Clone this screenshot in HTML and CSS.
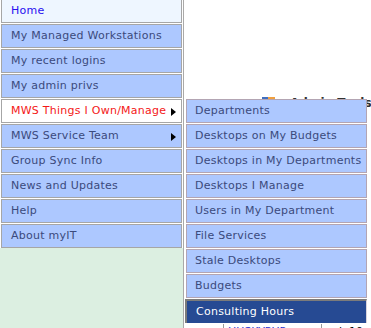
FILE: index.html
```html
<!DOCTYPE html>
<html lang="en">
<head>
    <meta charset="UTF-8">
    <meta name="viewport" content="width=device-width, initial-scale=1.0">
    <title>myIT</title>
    <link rel="stylesheet" href="styles.css">
</head>
<body>

<div class="page">
    <div class="sidebar">
        <ul class="menu">
            <li class="home">Home</li>
            <li>My Managed Workstations</li>
            <li>My recent logins</li>
            <li>My admin privs</li>
            <li class="has-sub open">MWS Things I Own/Manage
                <ul class="submenu">
                    <li>Departments</li>
                    <li>Desktops on My Budgets</li>
                    <li>Desktops in My Departments</li>
                    <li>Desktops I Manage</li>
                    <li>Users in My Department</li>
                    <li>File Services</li>
                    <li>Stale Desktops</li>
                    <li>Budgets</li>
                    <li class="current">Consulting Hours</li>
                </ul>
            </li>
            <li class="has-sub">MWS Service Team</li>
            <li>Group Sync Info</li>
            <li>News and Updates</li>
            <li>Help</li>
            <li>About myIT</li>
        </ul>
    </div>

    <div class="main">
        <h1 class="title"><span class="title-icon"></span>Admin Tools</h1>
        <table class="list">
            <tr>
                <td class="name"><a href="#">HUSKYPUP</a></td>
                <td>vvin10</td>
            </tr>
        </table>
    </div>
</div>

</body>
</html>
```

FILE: styles.css
```css
body {
    margin: 0;
    font-family: "DejaVu Sans", Verdana, sans-serif;
    font-size: 11px;
    background: #fff;
    overflow: hidden;
}
.page {
    display: flex;
    min-height: 328px;
}
.sidebar {
    width: 183px;
    flex: none;
    background: #dcefe1;
    border-right: 1px solid #a9a9a9;
}
.menu,
.submenu {
    list-style: none;
    margin: 0;
    padding: 0;
}
.menu {
    background: #fff;
}
.menu li {
    box-sizing: border-box;
    position: relative;
    height: 24px;
    line-height: 22px;
    margin: 0 1px 1px 1px;
    padding-left: 9px;
    border: 1px solid #a6a6a6;
    background: #adc8ff;
    color: #3b4a7c;
    letter-spacing: 0.25px;
    white-space: nowrap;
}
.menu > li:last-child {
    margin-bottom: 0;
}
.menu .home {
    margin-top: -1px;
    background: #eef6ff;
    color: #2a10f0;
}
.menu .open {
    background: #fff;
    color: #f41818;
}
.has-sub::after {
    content: "";
    position: absolute;
    right: 5px;
    top: 8px;
    border-left: 5px solid #000;
    border-top: 4.5px solid transparent;
    border-bottom: 4.5px solid transparent;
}
.submenu {
    position: absolute;
    top: -1px;
    left: 183px;
    width: 182px;
    z-index: 2;
}
.menu .submenu li {
    margin: 0 0 1px 1px;
    padding-left: 8px;
    border-color: #b3a5b3;
    color: #3b4a7c;
    background: #adc8ff;
}
.menu .submenu .current {
    margin: 0;
    padding-left: 9px;
    border: 2px solid #7b7b7b;
    border-right: 1px solid #d8d4dc;
    border-bottom: 0;
    background: #264a93;
    color: #fff;
}
.main {
    flex: 1;
    overflow: hidden;
}
.title {
    margin: 96px 0 0 78px;
    font-size: 12px;
    line-height: 14px;
    color: #333;
    white-space: nowrap;
}
.title-icon {
    display: inline-block;
    width: 13px;
    height: 12px;
    margin-right: 15px;
    background: linear-gradient(90deg, #3f6fc0 50%, #f0a040 50%);
    vertical-align: -2px;
}
.list {
    margin: 214px 0 0 39px;
    border-collapse: collapse;
}
.list td {
    padding: 1px 4px;
    border-left: 1px solid #9a9a9a;
    font-size: 11px;
    line-height: 14px;
}
.list .name {
    width: 89px;
}
.list a {
    color: #2b35d0;
}
```
